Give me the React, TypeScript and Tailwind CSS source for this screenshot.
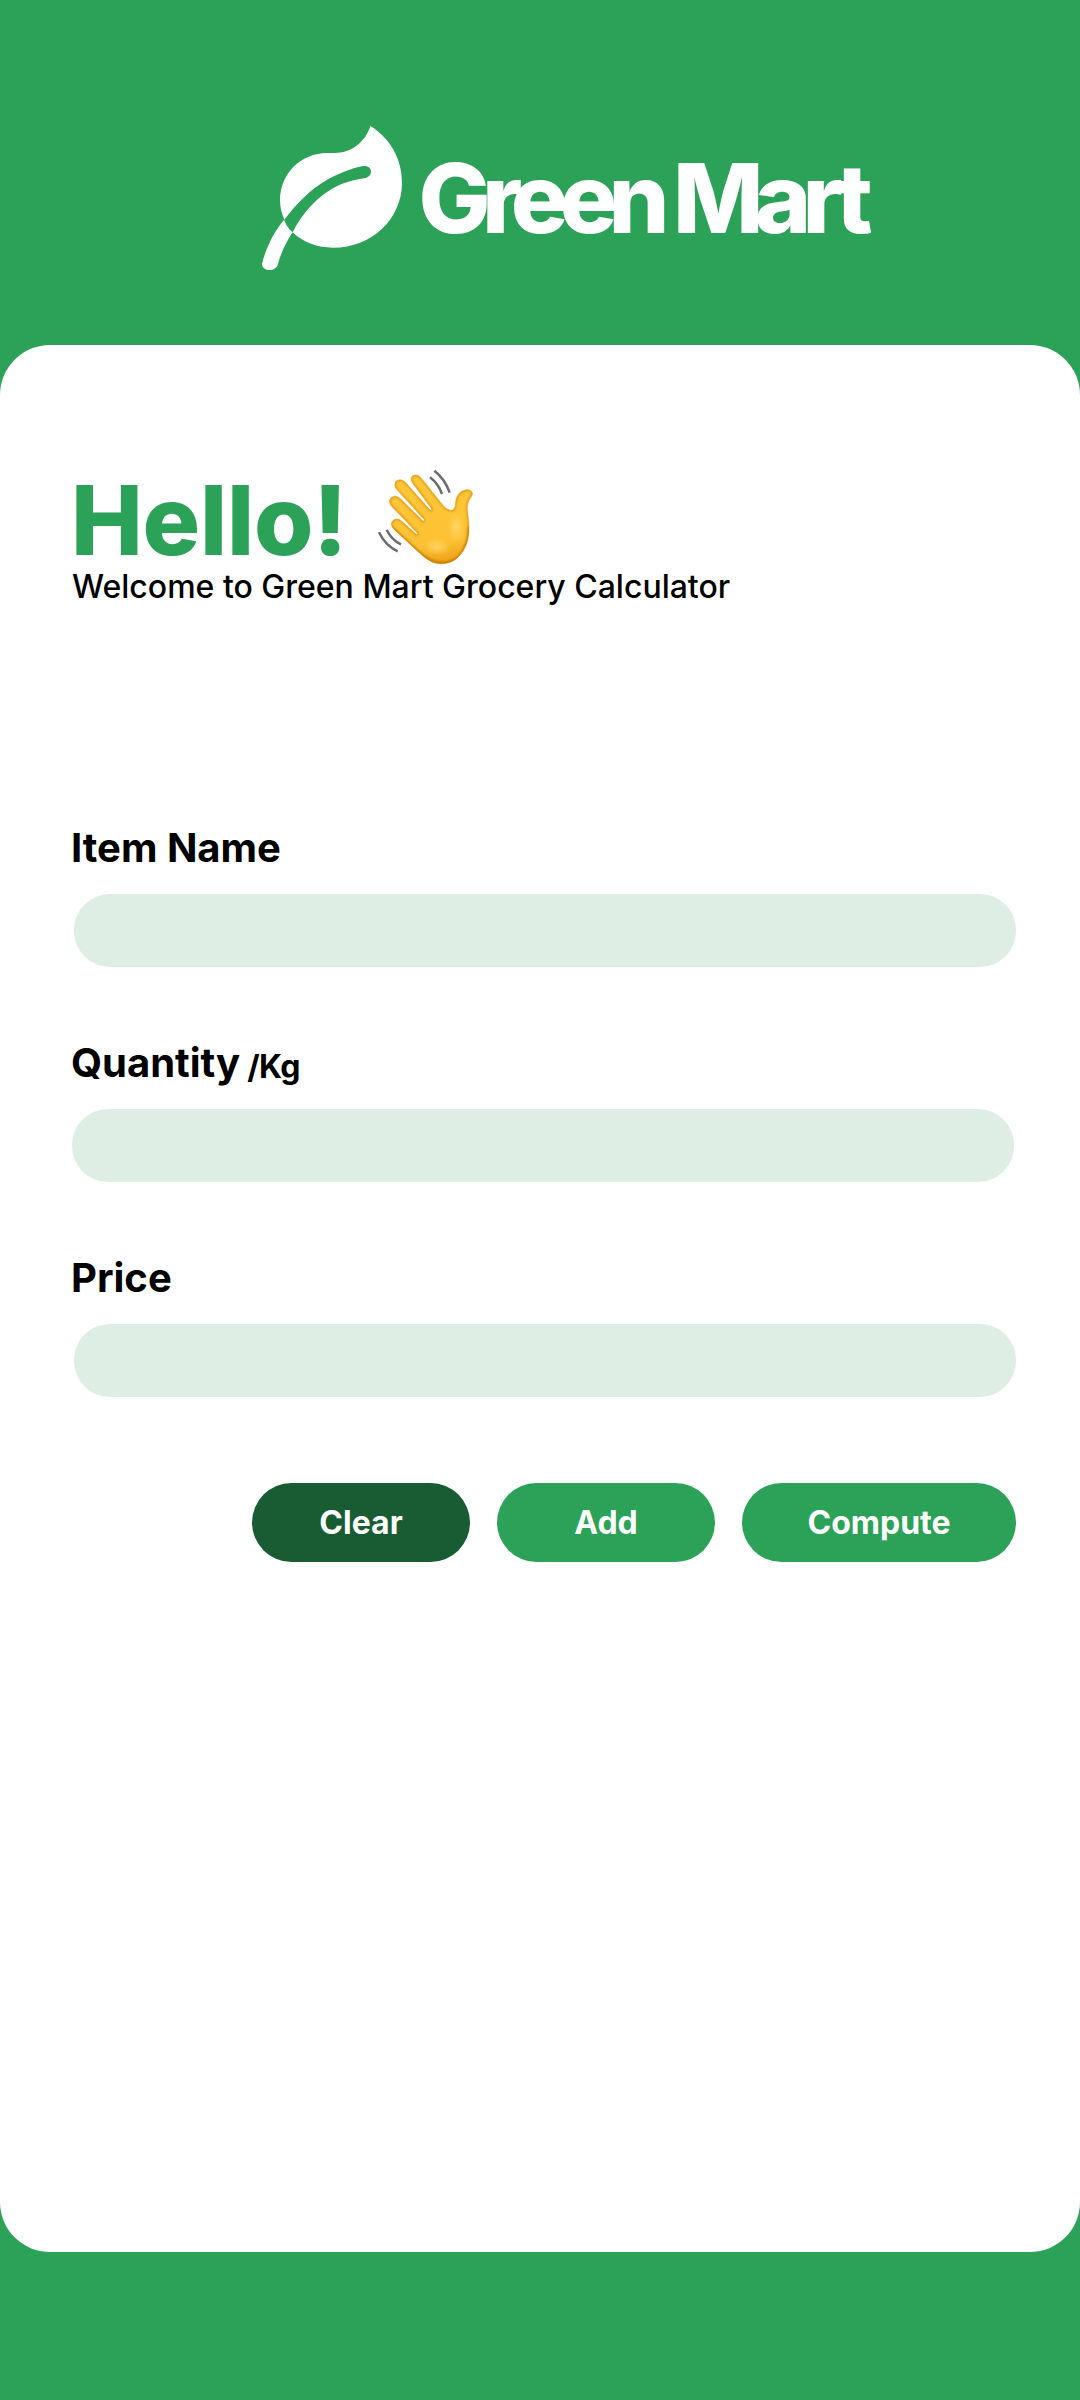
import React, { useState } from "react";

const HAND =
  "M98 217C91 204 99 192 112 192C118 192 123 196 128 200L171 239Q175 238 173 234L95 153C86 143 88 131 98 126C107 121 116 126 123 132L190 199Q195 198 193 193L111 103C102 92 104 81 114 76C123 72 132 76 139 84L212 166Q217 167 216 161L158 83C151 72 154 64 163 61C172 58 180 63 186 71L246 146C256 159 266 166 276 166C287 163 287 151 288 141C290 119 305 105 322 104C334 104 342 113 337 121C331 132 324 141 323 154C322 173 328 191 328 220C328 255 318 285 294 308C273 327 241 331 217 321C200 313 188 302 174 289L112 231C106 226 101 222 98 217Z";

function LeafLogo() {
  return (
    <svg className="mt-[126px] h-36 w-[140px] shrink-0" viewBox="36 48 420 432" fill="none" aria-hidden="true">
      <path
        fill="#fff"
        d="M361 48C421 84 456 148 456 218C456 326 366 413 249 413C202 413 161 398 128 367C157 308 204 259 254 232C284 216 316 209 344 205C356 202 363 193 363 185C363 175 355 168 344 168C325 168 272 187 234 208C181 237 138 284 103 329C94 308 90 290 90 270C90 191 153 129 232 129L253 129C304 129 346 96 361 48Z"
      />
      <path
        fill="#fff"
        d="M102 329C107 344 117 357 128 367C109 396 92 430 84 462C80 474 71 480 58 480C45 480 36 473 36 462C47 413 74 363 102 329Z"
      />
    </svg>
  );
}

function WavingHand() {
  return (
    <svg className="h-[95px] w-[95px] shrink-0 overflow-visible" viewBox="55 45 285 285" fill="none" aria-hidden="true">
      <defs>
        <linearGradient id="skin" gradientUnits="userSpaceOnUse" x1="210" y1="60" x2="250" y2="325">
          <stop offset="0" stopColor="#fec83a" />
          <stop offset="0.75" stopColor="#fdc233" />
          <stop offset="1" stopColor="#eda118" />
        </linearGradient>
        <radialGradient id="palm" cx="0.5" cy="0.5" r="0.5">
          <stop offset="0" stopColor="#ffd968" stopOpacity="0.9" />
          <stop offset="1" stopColor="#ffd968" stopOpacity="0" />
        </radialGradient>
        <clipPath id="handClip">
          <path d={HAND} />
        </clipPath>
        <filter id="soft" x="-20%" y="-20%" width="140%" height="140%">
          <feGaussianBlur stdDeviation="2.5" />
        </filter>
      </defs>
      <path d={HAND} fill="url(#skin)" stroke="#e8a524" strokeWidth="1.5" />
      <ellipse cx="290" cy="216" rx="26" ry="45" fill="url(#palm)" />
      <ellipse cx="232" cy="276" rx="40" ry="26" fill="url(#palm)" />
      <g clipPath="url(#handClip)">
        <path d={HAND} stroke="#dd9212" strokeWidth="6" filter="url(#soft)" />
        <path d="M100 222L174 290Q240 346 296 308Q328 275 328 215" stroke="#c47400" strokeWidth="6" filter="url(#soft)" />
      </g>
      <g stroke="#6c6c6c" strokeWidth="7.5">
        <path d="M224 47Q256 72 270 113" />
        <path d="M211 67Q236 86 247 117" />
        <path d="M58 232Q77 272 114 289" />
        <path d="M81 224Q95 254 124 268" />
      </g>
    </svg>
  );
}

function Field({
  id,
  label,
  suffix,
  className,
}: {
  id: string;
  label: string;
  suffix?: string;
  className: string;
}) {
  return (
    <div className="h-[215px]">
      <label htmlFor={id} className="-ml-px flex h-[70px] items-start text-[40px] leading-[48px] font-bold">
        {label}
        {suffix && <span className="ml-[7px] pt-1 text-[32px] tracking-[-0.6px]">{suffix}</span>}
      </label>
      <input id={id} className={"block h-[73px] w-[942px] rounded-[36px] bg-[#deeee4] px-8 text-[32px] outline-none " + className} />
    </div>
  );
}

export default function App() {
  const [formKey, setFormKey] = useState(0);
  const button = "h-[79px] rounded-[40px] text-[32px] font-bold text-white";
  return (
    <div className="flex h-[2400px] w-[1080px] flex-col bg-[#2ca258] font-['Inter',sans-serif] text-black">
      <header className="flex h-[345px] shrink-0 items-start pl-[262px]">
        <LeafLogo />
        <div className="mt-[140px] ml-[16.5px] text-[96px] leading-[116px] font-extrabold tracking-[-0.0915em] whitespace-nowrap text-white">
          Green Mart
        </div>
      </header>

      <main className="h-[1907px] shrink-0 rounded-[50px] bg-white pt-[117px] pl-[72px]">
        <div className="-ml-px flex h-[106px] items-start">
          <h1 className="mt-[10px] w-[307px] text-[96px] leading-[96px] font-extrabold tracking-[-0.25px] whitespace-nowrap text-[#2ca258]">
            Hello!
          </h1>
          <div className="pt-[8px]">
            <WavingHand />
          </div>
        </div>
        <p className="-mt-px text-[32px] leading-[39px] font-medium">Welcome to Green Mart Grocery Calculator</p>

        <form key={formKey} className="mt-[218px]" onSubmit={(e) => e.preventDefault()}>
          <Field id="item" label="Item Name" className="ml-[2px]" />
          <Field id="quantity" label="Quantity" suffix="/Kg" className="" />
          <Field id="price" label="Price" className="ml-[2px]" />
          <div className="mt-[14px] flex w-[944px] justify-end gap-[27px]">
            <button type="button" onClick={() => setFormKey(formKey + 1)} className={button + " w-[218px] bg-[#195b32]"}>
              Clear
            </button>
            <button type="button" className={button + " w-[218px] bg-[#2ca258]"}>
              Add
            </button>
            <button type="button" className={button + " w-[274px] bg-[#2ca258]"}>
              Compute
            </button>
          </div>
        </form>
      </main>
    </div>
  );
}
